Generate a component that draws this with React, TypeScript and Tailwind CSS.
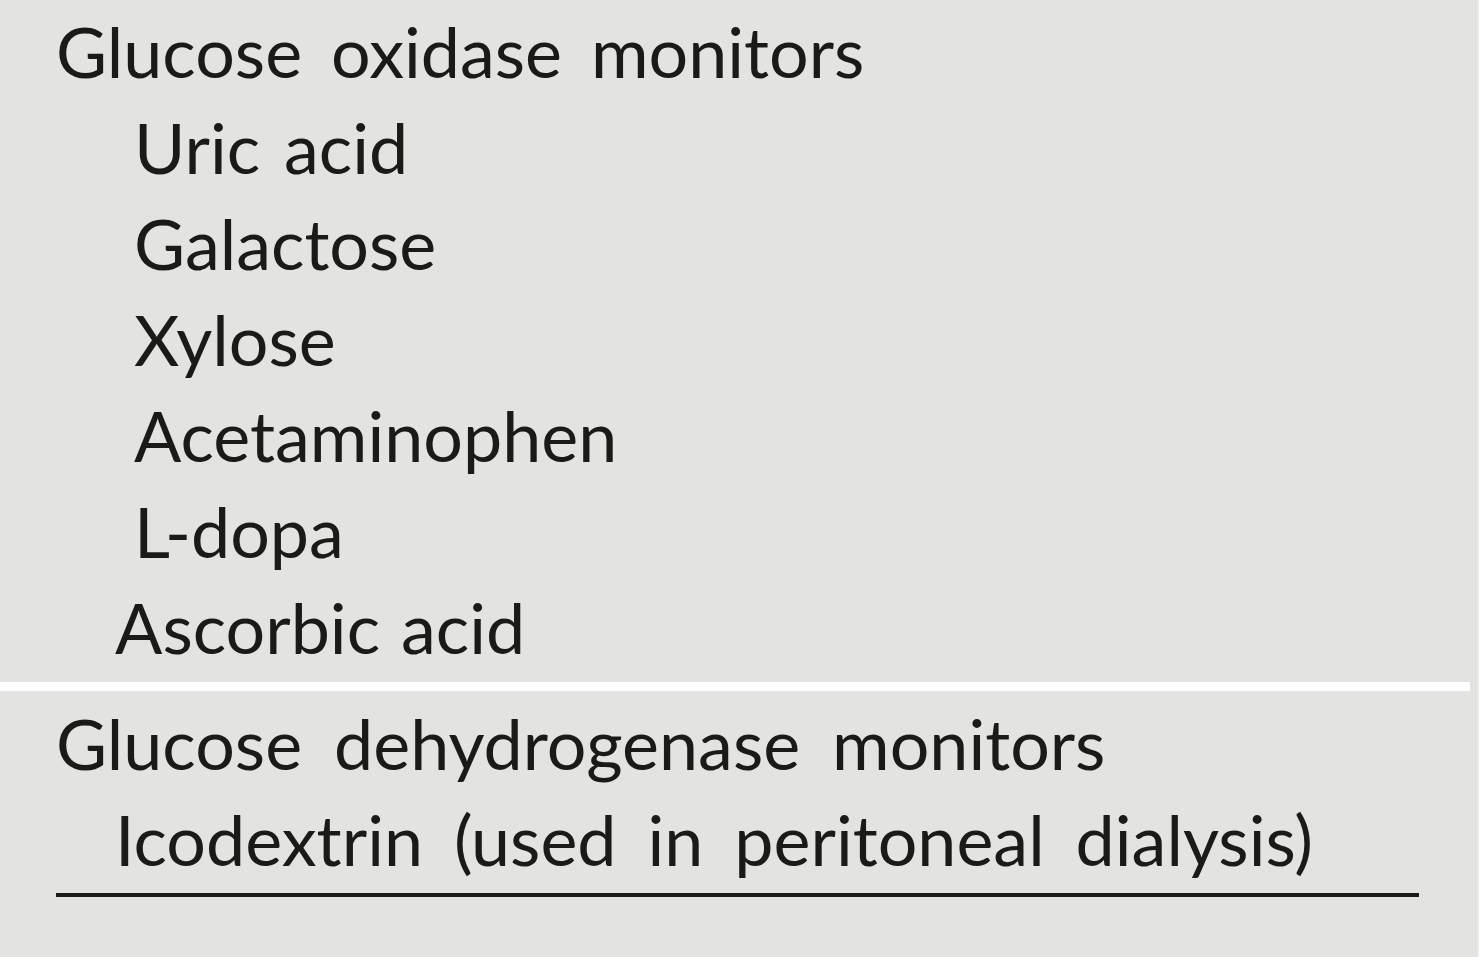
const FONT = "font-['Lato','Liberation_Sans',sans-serif]";

type Row = { text: string; indent: 0 | 1 | 2; gap: string };

// word gaps differ a little from line to line in the source table
const oxidase: Row[] = [
  { text: 'Glucose oxidase monitors', indent: 0, gap: '[word-spacing:11px]' },
  { text: 'Uric acid', indent: 2, gap: '[word-spacing:6px]' },
  { text: 'Galactose', indent: 2, gap: '' },
  { text: 'Xylose', indent: 2, gap: '' },
  { text: 'Acetaminophen', indent: 2, gap: '' },
  { text: 'L-dopa', indent: 2, gap: '' },
  { text: 'Ascorbic acid', indent: 1, gap: '[word-spacing:3px]' },
];

const dehydrogenase: Row[] = [
  { text: 'Glucose dehydrogenase monitors', indent: 0, gap: '[word-spacing:14px]' },
  { text: 'Icodextrin (used in peritoneal dialysis)', indent: 1, gap: '[word-spacing:13px]' },
];

function Line({ row }: { row: Row }) {
  const pad = row.indent === 0 ? 'pl-[56px]' : row.indent === 1 ? 'pl-[115px]' : 'pl-[134px]';
  return (
    <div className={`${pad} ${row.gap} h-[96px] leading-[96px] text-[70px] whitespace-nowrap`}>
      {row.text}
    </div>
  );
}

export default function App() {
  return (
    <div className={`w-[1479px] h-[957px] bg-[#e3e3e1] text-[#1a1a18] ${FONT} flex flex-col border-r-2 border-r-[#ececea]`}>
      <section className="pt-[3px]">
        {oxidase.map((r) => (
          <Line key={r.text} row={r} />
        ))}
      </section>
      <div className="mt-[7px] h-[9px] w-[1470px] bg-white" />
      <section className="pt-[4px]">
        {dehydrogenase.map((r) => (
          <Line key={r.text} row={r} />
        ))}
      </section>
      <div className="mt-[6px] ml-[56px] h-[4px] w-[1363px] bg-[#1a1a18]" />
    </div>
  );
}
